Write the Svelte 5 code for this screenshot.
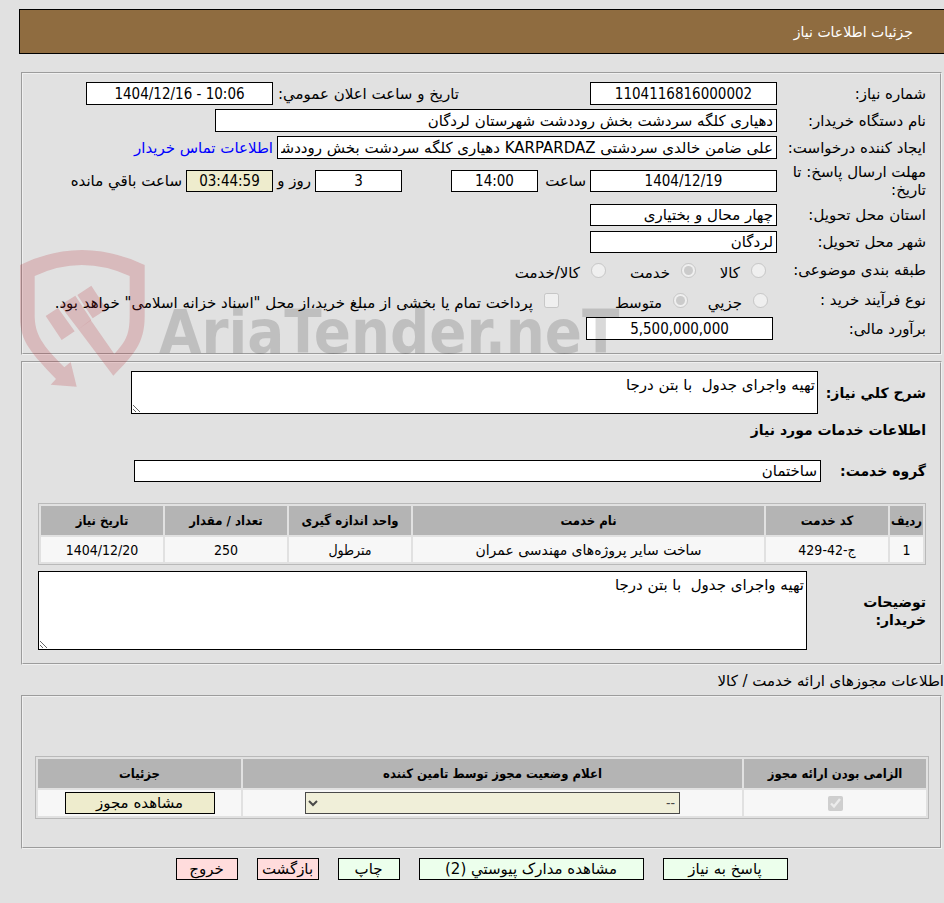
<script lang="ts">
  interface ServiceItem {
    row: number;
    code: string;
    name: string;
    unit: string;
    quantity: string;
    date: string;
  }

  const items: ServiceItem[] = [
    {
      row: 1,
      code: 'ج-42-429',
      name: 'ساخت سایر پروژه‌های مهندسی عمران',
      unit: 'مترطول',
      quantity: '250',
      date: '1404/12/20'
    }
  ];

  const actions = [
    { label: 'پاسخ به نیاز', kind: 'reply' },
    { label: 'مشاهده مدارک پیوستي (2)', kind: 'docs' },
    { label: 'چاپ', kind: 'print' },
    { label: 'بازگشت', kind: 'back' },
    { label: 'خروج', kind: 'exit' }
  ];

  let category = $state('service');
  let process = $state('medium');
  let summary = $state('تهیه واجرای جدول  با بتن درجا');
  let notes = $state('تهیه واجرای جدول  با بتن درجا');
</script>

<main class="page" dir="rtl">
  <header class="title-bar"><h1>جزئیات اطلاعات نیاز</h1></header>

  <section class="panel info">
    <div class="row">
      <label class="name" for="need-no">شماره نیاز:</label>
      <input class="box tall mid number" id="need-no" readonly value="1104116816000002" />
      <label class="announce" for="announce">تاریخ و ساعت اعلان عمومي:</label>
      <input class="box tall mid number" id="announce" dir="ltr" readonly value="1404/12/16 - 10:06" />
    </div>
    <div class="row">
      <label class="name" for="buyer">نام دستگاه خریدار:</label>
      <input class="box tall buyer" id="buyer" readonly value="دهیاری کلگه سردشت بخش روددشت شهرستان لردگان" />
    </div>
    <div class="row">
      <label class="name" for="creator">ایجاد کننده درخواست:</label>
      <input class="box tall creator" id="creator" readonly value="علی ضامن خالدی سردشتی KARPARDAZ دهیاری کلگه سردشت بخش روددشت شهرستان لردگان" />
      <a href="#contact">اطلاعات تماس خریدار</a>
    </div>
    <div class="row deadline">
      <label class="name" for="due">مهلت ارسال پاسخ: تا تاریخ:</label>
      <input class="box mid number" id="due" readonly value="1404/12/19" />
      <label class="hour" for="due-time">ساعت</label>
      <input class="box small number" id="due-time" readonly value="14:00" />
      <input class="box small number days" id="days" readonly value="3" />
      <label class="and" for="days">روز و</label>
      <input class="box small number timer" id="left" readonly value="03:44:59" />
      <label for="left">ساعت باقي مانده</label>
    </div>
    <div class="row">
      <label class="name" for="province">استان محل تحویل:</label>
      <input class="box mid" id="province" readonly value="چهار محال و بختیاری" />
    </div>
    <div class="row">
      <label class="name" for="city">شهر محل تحویل:</label>
      <input class="box mid" id="city" readonly value="لردگان" />
    </div>
    <div class="row options">
      <span class="name">طبقه بندی موضوعی:</span>
      <label class="option goods"><input type="radio" value="goods" bind:group={category} disabled /><span>کالا</span></label>
      <label class="option service"><input type="radio" value="service" bind:group={category} disabled /><span>خدمت</span></label>
      <label class="option"><input type="radio" value="both" bind:group={category} disabled /><span>کالا/خدمت</span></label>
    </div>
    <div class="row options">
      <span class="name">نوع فرآیند خرید :</span>
      <label class="option minor"><input type="radio" value="minor" bind:group={process} disabled /><span>جزيي</span></label>
      <label class="option medium"><input type="radio" value="medium" bind:group={process} disabled /><span>متوسط</span></label>
      <label class="option treasury"><input type="checkbox" disabled /><span>پرداخت تمام یا بخشی از مبلغ خرید،از محل "اسناد خزانه اسلامی" خواهد بود.</span></label>
    </div>
    <div class="row">
      <label class="name" for="estimate">برآورد مالی:</label>
      <input class="box tall mid number estimate" id="estimate" readonly value="5,500,000,000" />
    </div>

    <svg class="watermark" viewBox="0 0 600 142" aria-hidden="true">
      <g class="shield" transform="translate(-21 -20) scale(0.3333)">
        <path d="M60 105Q245 15 434 105V260C434 340 400 375 340 437L235 298L272 270L343 372C378 333 389 315 389 255V138Q245 72 104 138V255C104 315 128 346 193 412L212 396L230 470L152 464L168 447C95 370 60 335 60 262Z" />
        <path d="M137 258L174 234L224 304L185 330ZM180 226L226 197L274 270L235 298ZM232 195L274 167L320 238L278 265Z" />
      </g>
      <text x="138" y="103">AriaTender.neT</text>
    </svg>
  </section>

  <section class="panel need">
    <div class="line">
      <label class="strong summary-name" for="summary">شرح کلي نیاز:</label>
      <textarea class="summary" id="summary" bind:value={summary}></textarea>
    </div>
    <h2>اطلاعات خدمات مورد نیاز</h2>
    <div class="line group">
      <label class="strong group-name" for="group">گروه خدمت:</label>
      <input class="box grow" id="group" readonly value="ساختمان" />
    </div>
    <table class="items">
      <colgroup>
        <col class="c-row" /><col class="c-mid" /><col /><col class="c-mid" /><col class="c-mid" /><col class="c-mid" />
      </colgroup>
      <thead>
        <tr>
          <th>ردیف</th>
          <th>کد خدمت</th>
          <th>نام خدمت</th>
          <th>واحد اندازه گیری</th>
          <th>تعداد / مقدار</th>
          <th>تاریخ نیاز</th>
        </tr>
      </thead>
      <tbody>
        {#each items as item (item.row)}
          <tr>
            <td>{item.row}</td>
            <td>{item.code}</td>
            <td class="service-name">{item.name}</td>
            <td>{item.unit}</td>
            <td>{item.quantity}</td>
            <td>{item.date}</td>
          </tr>
        {/each}
      </tbody>
    </table>
    <div class="line">
      <label class="strong notes-name" for="notes">توضیحات خریدار:</label>
      <textarea class="notes" id="notes" bind:value={notes}></textarea>
    </div>
  </section>

  <p class="caption">اطلاعات مجوزهای ارائه خدمت / کالا</p>

  <section class="panel permits">
    <table>
      <colgroup>
        <col class="c-must" /><col /><col class="c-details" />
      </colgroup>
      <thead>
        <tr>
          <th>الزامی بودن ارائه مجوز</th>
          <th>اعلام وضعیت مجوز توسط تامین کننده</th>
          <th>جزئیات</th>
        </tr>
      </thead>
      <tbody>
        <tr>
          <td><input class="tick" type="checkbox" aria-label="الزامی بودن ارائه مجوز" checked disabled /></td>
          <td>
            <select aria-label="اعلام وضعیت مجوز" disabled>
              <option>--</option>
            </select>
          </td>
          <td><button type="button" class="view">مشاهده مجوز</button></td>
        </tr>
      </tbody>
    </table>
  </section>

  <footer class="actions">
    {#each actions as action (action.kind)}
      <button type="button" class={action.kind}>{action.label}</button>
    {/each}
  </footer>
</main>

<style>
  :global(body) { background: #e1e1e1; }
  .page {
    padding: 9px 0 24px 19px;
    color: #000;
    font-family: "DejaVu Sans", sans-serif;
    font-size: 15px;
    line-height: 18px;
  }
  .page * { box-sizing: border-box; }
  input, textarea, select, button { font: inherit; color: inherit; }

  .title-bar {
    display: flex;
    align-items: center;
    height: 45px;
    margin-bottom: 18px;
    padding: 0 31px;
    border: 1px solid #000;
    border-right: none;
    background: #8f6c40;
    color: #fff;
  }
  h1 { margin: 0; font-size: 14px; font-weight: 400; }

  .panel {
    position: relative;
    margin: 0 2px 0 2px;
    border: 2px groove #f0f0f0;
  }
  .info { padding: 6px 14px 11px 0; }
  .row { display: flex; align-items: center; gap: 4px; min-height: 27px; white-space: nowrap; }
  .name { flex: none; width: 145px; white-space: normal; }
  .deadline { min-height: 40px; }
  .options { min-height: 30px; gap: 0; }

  .box {
    height: 22px;
    margin: 0;
    padding: 0 3px;
    border: 1px solid #000;
    border-radius: 0;
    background: #fff;
  }
  .tall { height: 23px; }
  .mid { width: 187px; }
  .small { width: 87px; }
  .number { font-family: "DejaVu Sans Condensed", "DejaVu Sans", sans-serif; text-align: center; }
  .buyer { width: 562px; }
  .creator { width: 500px; }
  .days { margin-right: 45px; }
  .timer { background: #eeeccd; }
  .announce { width: 182px; margin-right: 127px; }
  .hour { width: 44px; }
  .and { width: 34px; }
  .estimate { margin-right: 4px; }
  a { color: #00f; text-decoration: none; }

  .option { display: flex; flex: none; align-items: center; gap: 11px; }
  .option input { flex: none; width: 15px; height: 15px; margin: 0; }
  .option span { padding-top: 6px; }
  .goods { width: 70px; margin-right: 15px; }
  .service { width: 90px; }
  .minor { width: 80px; margin-right: 13px; }
  .medium { width: 129px; }

  .watermark {
    position: absolute;
    z-index: 1;
    left: -2px;
    top: 176px;
    width: 600px;
    height: 142px;
    overflow: visible;
    pointer-events: none;
  }
  .shield { fill: rgba(178, 30, 40, 0.2); }
  .watermark text {
    fill: rgba(0, 0, 0, 0.15);
    font-family: "DejaVu Sans Condensed", "DejaVu Sans", sans-serif;
    font-size: 61px;
    font-weight: 700;
    direction: ltr;
  }

  .need { margin-top: 6px; padding: 8px 14px 13px 15px; }
  .line { display: flex; align-items: center; }
  .strong, h2 { font-size: 14px; font-weight: 700; }
  .strong { flex: none; }
  .summary-name { width: 108px; }
  .group-name { width: 105px; }
  .notes-name { width: 119px; padding-left: 40px; }
  textarea {
    display: block;
    flex: 1;
    min-width: 0;
    margin: 0;
    padding: 4px 2px;
    border: 1px solid #000;
  }
  .summary { height: 43px; margin-left: 93px; }
  .notes { height: 79px; }
  h2 { margin: 6px 0 20px; line-height: 20px; }
  .group { margin-bottom: 21px; }
  .grow { flex: 1; margin-left: 96px; }

  table {
    width: 100%;
    border: 1px solid #b9b9b9;
    border-spacing: 2px;
    table-layout: fixed;
    text-align: center;
  }
  th, td { padding: 0; font-family: "DejaVu Sans Condensed", "DejaVu Sans", sans-serif; }
  th { height: 29px; background: #b4b4b4; font-size: 13px; font-weight: 700; white-space: nowrap; }
  td { height: 25px; background: #f7f7f7; font-size: 14px; }
  .service-name { font-family: "DejaVu Sans", sans-serif; }
  .items { margin-bottom: 6px; }
  .c-row { width: 33px; }
  .c-mid { width: 122px; }

  .caption { margin: 7px 0 5px; line-height: 18px; }

  .permits { padding: 59px 11px 28px 12px; }
  .c-must { width: 182px; }
  .c-details { width: 203px; }
  .permits td { height: 26px; }
  .tick { display: block; width: 15px; height: 15px; margin: 0 auto; }
  select {
    display: block;
    width: 375px;
    height: 22px;
    margin: 0 auto;
    border: 1px solid #000;
    border-radius: 0;
    background-color: #eeeccd;
    opacity: 0.7;
  }

  button {
    height: 22px;
    padding: 0;
    border: 1px solid #000;
    border-radius: 0;
    background: #ecffec;
    line-height: 20px;
  }
  .view { display: block; width: 150px; margin: 0 auto; background: #eeeccd; font-family: "DejaVu Sans", sans-serif; font-size: 15px; }
  .actions { display: flex; justify-content: center; gap: 19px; margin-top: 9px; }
  .reply { width: 125px; }
  .docs { width: 225px; }
  .print, .back, .exit { width: 62px; }
  .back, .exit { background: #ffdcdc; }
</style>
